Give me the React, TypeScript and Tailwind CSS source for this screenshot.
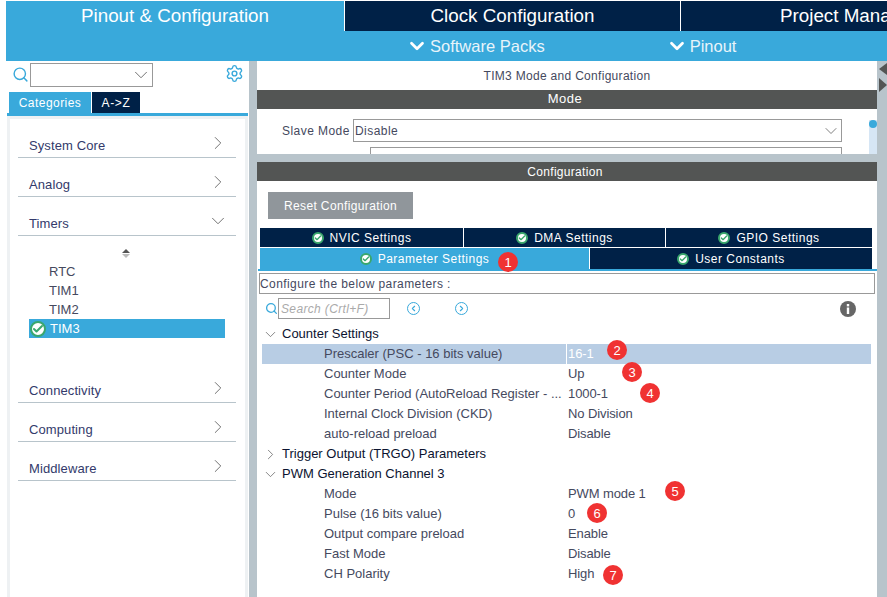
import { ChevronDown, ChevronLeft, ChevronRight, Settings, Search, Check } from "lucide-react"

const font = "font-['Liberation_Sans',Arial,sans-serif]"

function Badge({ n }: { n: number }) {
  return (
    <span className="absolute flex w-5 h-5 items-center justify-center rounded-full bg-[#f03232] text-white text-[13px] leading-none">
      {n}
    </span>
  )
}

function CheckDot({ size = 12 }: { size?: number }) {
  return (
    <span className="inline-flex items-center justify-center rounded-full bg-white border-2 border-[#3aa76d] shrink-0" style={{ width: size, height: size }}>
      <Check size={size - 4} strokeWidth={4} className="text-[#3aa76d]" />
    </span>
  )
}

function Category({ label, open, className = "" }: { label: string; open?: boolean; className?: string }) {
  return (
    <div className={`flex h-[39px] items-end justify-between border-b border-[#b8c4cb] pl-[11px] pr-[11px] pb-[1px] text-[13px] tracking-[0.1px] leading-[20px] text-[#333a6b] ${className}`}>
      <span>{label}</span>
      {open ? (
        <ChevronDown size={22} strokeWidth={1} className="mb-[2px] mr-[-4px] text-[#666]" />
      ) : (
        <ChevronRight size={22} strokeWidth={1} className="mb-[2px] mr-[-4px] text-[#666]" />
      )}
    </div>
  )
}

function SubTab({ label, active, className = "" }: { label: string; active?: boolean; className?: string }) {
  return (
    <div className={`flex h-full items-center justify-center gap-[6px] text-[12px] tracking-[0.5px] text-white ${active ? "bg-[#39a9db]" : "bg-[#002147]"} ${className}`}>
      <CheckDot />
      <span>{label}</span>
    </div>
  )
}

function Group({ label, open }: { label: string; open?: boolean }) {
  return (
    <div className="flex h-5 items-center text-[13px] text-[#0b1330]">
      {open ? (
        <ChevronDown size={17} strokeWidth={1.1} className="text-[#666] mr-[3px]" />
      ) : (
        <ChevronRight size={17} strokeWidth={1.1} className="text-[#666] mr-[3px]" />
      )}
      {label}
    </div>
  )
}

function Param({ label, value, selected, badge, badgeClass = "" }: { label: string; value: string; selected?: boolean; badge?: number; badgeClass?: string }) {
  return (
    <div className={`relative flex h-5 items-center text-[13px] text-[#45495e] ${selected ? "bg-[#b8cde4]" : ""}`}>
      <span className={`w-[305px] shrink-0 overflow-hidden whitespace-nowrap pl-[62px] ${selected ? "border-r border-white" : ""}`}>{label}</span>
      <span className={`pl-[1px] tracking-[-0.1px] ${selected ? "text-white" : ""}`}>{value}</span>
      {badge != null && <span className={badgeClass}><Badge n={badge} /></span>}
    </div>
  )
}

export default function App() {
  return (
    <div className={`${font} h-[597px] w-[887px] overflow-hidden bg-white pt-px pl-[6px]`}>
      {/* top nav */}
      <div className="flex h-[30px] text-[18.8px] text-white">
        <div className="flex w-[338px] items-center justify-center bg-[#39a9db]">Pinout &amp; Configuration</div>
        <div className="ml-px flex w-[335px] items-center justify-center bg-[#002147]">Clock Configuration</div>
        <div className="ml-px flex flex-1 items-center overflow-hidden whitespace-nowrap bg-[#002147] pl-[99px]">Project Manager</div>
      </div>
      <div className="flex h-[30px] bg-[#39a9db] text-[16.5px] text-[#e8f4fa]">
        <div className="ml-[400px] flex items-center gap-[2px]">
          <ChevronDown size={22} strokeWidth={3} className="text-white" />
          Software Packs
        </div>
        <div className="ml-[121px] flex items-center gap-[2px]">
          <ChevronDown size={22} strokeWidth={3} className="text-white" />
          Pinout
        </div>
      </div>

      <div className="flex h-[536px]">
        {/* left sidebar */}
        <div className="w-[243px] shrink-0">
          <div className="flex h-[31px] items-start pl-[6px] pt-[2px]">
            <Search size={17} strokeWidth={2} className="mt-[3px] text-[#39a9db]" />
            <div className="ml-px flex h-[24px] w-[123px] items-center justify-end border border-[#999]">
              <ChevronDown size={22} strokeWidth={1} className="text-[#666]" />
            </div>
            <Settings size={19} strokeWidth={1.8} className="ml-[72px] mt-[1px] text-[#39a9db]" />
          </div>
          <div className="flex h-[21px] pl-[3px] text-[12px] text-white">
            <div className="flex w-[82px] items-center justify-center bg-[#39a9db] tracking-[0.45px]">Categories</div>
            <div className="ml-px flex w-[48px] items-center justify-center bg-[#002147] tracking-[0.7px]">A-&gt;Z</div>
          </div>
          <div className="ml-px h-[3px] w-[241px] bg-[#39a9db]" />
          <div className="ml-px mr-px h-[481px] border-x-[3px] border-t-[3px] border-[#eef1f3] pl-[8px] pr-[9px]">
            <Category label="System Core" className="h-[26px]" />
            <Category label="Analog" />
            <Category label="Timers" open />
            <div className="h-[128px] pl-[11px] text-[13px] text-[#45495e]">
              <div className="flex h-[22px] items-end justify-center pr-[14px]">
                <div className="flex flex-col gap-px">
                  <span className="h-0 w-0 border-x-[4px] border-b-[4px] border-x-transparent border-b-[#555]" />
                  <span className="h-0 w-0 border-x-[4px] border-t-[4px] border-x-transparent border-t-[#bbb]" />
                </div>
              </div>
              <div className="mt-[4px]">
                <div className="h-[19px] pl-[20px] leading-[19px]">RTC</div>
                <div className="h-[19px] pl-[20px] leading-[19px]">TIM1</div>
                <div className="h-[19px] pl-[20px] leading-[19px]">TIM2</div>
                <div className="flex h-[19px] w-[196px] items-center gap-[4px] bg-[#39a9db] pl-px text-white">
                  <CheckDot size={16} />
                  TIM3
                </div>
              </div>
            </div>
            <Category label="Connectivity" />
            <Category label="Computing" />
            <Category label="Middleware" />
          </div>
        </div>

        {/* vertical splitter */}
        <div className="w-[8px] shrink-0 bg-[#b8c4cb]" />

        {/* right column */}
        <div className="w-[620px] shrink-0">
          {/* mode pane */}
          <div className="h-[93px] overflow-hidden">
            <div className="flex h-[29px] items-center justify-center text-[12px] tracking-[0.3px] text-[#45495e]">TIM3 Mode and Configuration</div>
            <div className="flex h-[19px] items-center justify-center bg-[#535554] pb-px pr-[4px] text-[13px] tracking-[0.5px] text-white">Mode</div>
            <div className="relative pr-[7px]">
              <div className="mt-[10px] flex items-center pl-[25px] text-[12px] tracking-[0.45px] text-[#45495e]">
                <span className="w-[71px] shrink-0">Slave Mode</span>
                <div className="flex h-[23px] w-[489px] items-center justify-between border border-[#999] pl-px">
                  Disable
                  <ChevronDown size={20} strokeWidth={1} className="text-[#666]" />
                </div>
              </div>
              <div className="mt-[5px] flex items-center pl-[25px] text-[12px] tracking-[0.45px] text-[#45495e]">
                <span className="w-[88px] shrink-0">Trigger Source</span>
                <div className="flex h-[23px] w-[472px] items-center border border-[#999] pl-px">Disable</div>
              </div>
              <div className="absolute right-0 top-[1px] h-[40px] w-[8px] bg-[#d6e6f5]">
                <div className="h-[8px] w-[8px] rounded-full bg-[#39a9db]" />
              </div>
            </div>
          </div>
          <div className="h-[8px] bg-[#b8c4cb]" />

          {/* configuration pane */}
          <div className="flex h-[19px] items-center justify-center bg-[#535554] pr-[4px] text-[12px] tracking-[0.3px] text-white">Configuration</div>
          <div className="pl-[3px] pr-[5px]">
            <div className="ml-[8px] mt-[11px] flex h-[27px] w-[145px] items-center justify-center bg-[#90969b] text-[12px] tracking-[0.37px] text-white">Reset Configuration</div>
            <div className="mt-[9px] grid h-[19px] grid-cols-[203px_201px_1fr] gap-x-px">
              <SubTab label="NVIC Settings" />
              <SubTab label="DMA Settings" />
              <SubTab label="GPIO Settings" />
            </div>
            <div className="relative mt-px grid h-[21px] grid-cols-[329px_1fr] gap-x-px">
              <SubTab label="Parameter Settings" active />
              <SubTab label="User Constants" />
              <span className="absolute left-[238px] top-[4px]"><Badge n={1} /></span>
            </div>
            <div className="-ml-[2px] -mr-[5px] h-[2px] bg-[#39a9db]" />
            <div className="-ml-px -mr-[3px] mt-[2px] flex h-[21px] items-center border border-[#999] text-[12px] tracking-[0.42px] text-[#45495e]">Configure the below parameters :</div>
            <div className="mt-[4px] flex h-[21px] items-center">
              <Search size={13} strokeWidth={2.4} className="ml-[5px] text-[#39a9db]" />
              <div className="flex h-[21px] w-[112px] items-center border border-[#999] pl-[2px] text-[12px] italic tracking-[0.35px] text-[#aaa]">Search (Crtl+F)</div>
              <span className="ml-[17px] flex h-[13px] w-[13px] items-center justify-center rounded-full border-[1.5px] border-[#39a9db]">
                <ChevronLeft size={9} strokeWidth={3} className="text-[#39a9db]" />
              </span>
              <span className="ml-[35px] flex h-[13px] w-[13px] items-center justify-center rounded-full border-[1.5px] border-[#39a9db]">
                <ChevronRight size={9} strokeWidth={3} className="text-[#39a9db]" />
              </span>
              <svg viewBox="0 0 16 16" className="ml-[372px] h-4 w-4">
                <circle cx="8" cy="8" r="8" fill="#666" />
                <rect x="6.8" y="3" width="2.4" height="2.4" fill="#fff" />
                <rect x="6.8" y="6.5" width="2.4" height="6.5" fill="#fff" />
              </svg>
            </div>
            <div className="mt-[5px] mr-px pl-[2px]">
              <Group label="Counter Settings" open />
              <Param label="Prescaler (PSC - 16 bits value)" value="16-1" selected badge={2} badgeClass="absolute left-[345px] top-[-4px]" />
              <Param label="Counter Mode" value="Up" badge={3} badgeClass="absolute left-[360px] top-[-2px]" />
              <Param label="Counter Period (AutoReload Register - ..." value="1000-1" badge={4} badgeClass="absolute left-[378px] top-[-1px]" />
              <Param label="Internal Clock Division (CKD)" value="No Division" />
              <Param label="auto-reload preload" value="Disable" />
              <Group label="Trigger Output (TRGO) Parameters" />
              <Group label="PWM Generation Channel 3" open />
              <Param label="Mode" value="PWM mode 1" badge={5} badgeClass="absolute left-[403px] top-[-3px]" />
              <Param label="Pulse (16 bits value)" value="0" badge={6} badgeClass="absolute left-[325px] top-[-1px]" />
              <Param label="Output compare preload" value="Enable" />
              <Param label="Fast Mode" value="Disable" />
              <Param label="CH Polarity" value="High" badge={7} badgeClass="absolute left-[341px] top-[1px]" />
            </div>
          </div>
        </div>

        {/* right edge */}
        <div className="relative flex-1 bg-[#b8c4cb]">
          <span className="absolute left-[2px] top-[2px] h-0 w-0 border-y-[6px] border-r-[8px] border-y-transparent border-r-[#535554]" />
          <span className="absolute left-[2px] top-[17px] h-0 w-0 border-y-[7px] border-l-[8px] border-y-transparent border-l-[#535554]" />
        </div>
      </div>
    </div>
  )
}
